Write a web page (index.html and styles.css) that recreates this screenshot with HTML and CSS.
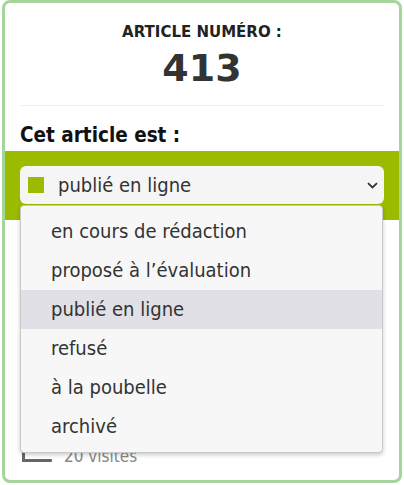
FILE: index.html
```html
<!DOCTYPE html>
<html lang="fr">
<head>
    <meta charset="UTF-8">
    <title>Article 413</title>
    <link rel="stylesheet" href="styles.css">
</head>
<body>
    <div class="card">
        <div class="numero">
            <div class="numero-label">ARTICLE NUMÉRO :</div>
            <div class="numero-value">413</div>
        </div>
        <div class="statut-title">Cet article est :</div>
        <div class="statut-band">
            <div class="statut-select">
                <span class="puce"></span>
                <span class="statut-text">publié en ligne</span>
                <svg class="chevron" width="11" height="7" viewBox="0 0 11 7">
                    <path d="M1 1.2 L5.5 5.5 L10 1.2" fill="none" stroke="#333" stroke-width="1.8"/>
                </svg>
            </div>
        </div>
        <div class="visites">
            <svg class="visites-icon" width="30" height="16" viewBox="0 0 30 16">
                <rect x="0" y="0" width="3" height="14" rx="1" fill="#666"/>
                <rect x="0" y="11" width="30" height="3" rx="1" fill="#666"/>
            </svg>
            <span>20 visites</span>
        </div>

        <ul class="statut-menu">
            <li>en cours de rédaction</li>
            <li>proposé à l’évaluation</li>
            <li class="selected">publié en ligne</li>
            <li>refusé</li>
            <li>à la poubelle</li>
            <li>archivé</li>
        </ul>
    </div>
</body>
</html>
```

FILE: styles.css
```css
:root {
    --vert: #9abb00;
    --bordure: #a6d59c;
    --texte: #333;
    --menu-bg: #f7f7f7;
}
body {
    margin: 0;
    font-family: 'DejaVu Sans Condensed', 'DejaVu Sans', sans-serif;
    color: var(--texte);
    background: #fff;
}
.card {
    position: relative;
    box-sizing: border-box;
    height: 483px;
    margin: 0 2px;
    border: 3px solid var(--bordure);
    border-radius: 8px;
    overflow: hidden;
}
.numero {
    margin: 0 15px;
    padding: 20px 0 13px;
    text-align: center;
    border-bottom: 1px solid #eee;
}
.numero-label {
    font-family: 'DejaVu Sans', sans-serif;
    font-size: 15px;
    font-weight: 700;
    line-height: 18px;
    color: #222;
}
.numero-value {
    padding-top: 4px;
    font-family: 'DejaVu Sans', sans-serif;
    font-size: 38px;
    font-weight: 700;
    line-height: 47px;
}
.statut-title {
    margin: 0 15px;
    padding: 17px 0 0;
    height: 28px;
    font-size: 20.5px;
    font-weight: 700;
    line-height: 24px;
    color: #111;
}
.statut-band {
    background: var(--vert);
    padding: 15px 15px 16px;
}
.statut-select {
    display: flex;
    align-items: center;
    height: 38px;
    padding: 0 6px 0 8px;
    background: #f5f5f5;
    border-radius: 6px;
    font-size: 20px;
}
.puce {
    width: 16px;
    height: 16px;
    background: var(--vert);
    margin-right: 14px;
}
.statut-text {
    flex: 1;
}
.visites {
    display: flex;
    align-items: center;
    gap: 12px;
    margin: 226px 15px 0 17px;
    font-size: 17px;
    color: #888;
}
.statut-menu {
    position: absolute;
    top: 202px;
    left: 15px;
    width: 363px;
    box-sizing: border-box;
    margin: 0;
    padding: 6px 0;
    list-style: none;
    background: var(--menu-bg);
    border: 1px solid #c8c8c8;
    border-radius: 4px;
    box-shadow: 0 2px 4px rgba(0, 0, 0, 0.2);
    font-size: 20px;
}
.statut-menu li {
    height: 39px;
    line-height: 39px;
    padding-left: 30px;
}
.statut-menu li.selected {
    background: #e0e0e6;
}
```
